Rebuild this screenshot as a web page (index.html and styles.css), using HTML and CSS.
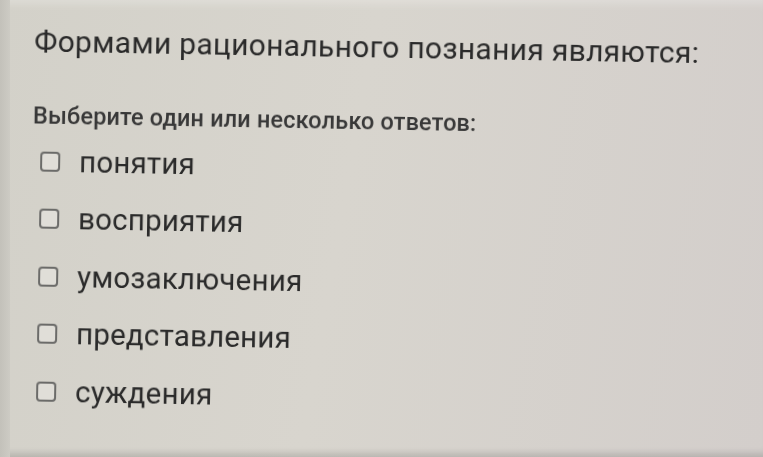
FILE: index.html
```html
<!DOCTYPE html>
<html lang="ru">
<head>
<meta charset="utf-8">
<link rel="stylesheet" href="styles.css">
</head>
<body>
<div class="screen">
  <div class="edge"></div>
  <div class="content">
    <h1 class="question">Формами рационального познания являются:</h1>
    <p class="hint">Выберите один или несколько ответов:</p>
    <ul class="answers">
      <li class="answer"><span class="box"></span><span class="label">понятия</span></li>
      <li class="answer"><span class="box"></span><span class="label">восприятия</span></li>
      <li class="answer"><span class="box"></span><span class="label">умозаключения</span></li>
      <li class="answer"><span class="box"></span><span class="label">представления</span></li>
      <li class="answer"><span class="box"></span><span class="label">суждения</span></li>
    </ul>
  </div>
</div>
</body>
</html>
```
FILE: styles.css
```css
html, body {
  margin: 0;
  padding: 0;
}
body {
  width: 763px;
  height: 457px;
  overflow: hidden;
  font-family: Roboto, "Liberation Sans", sans-serif;
}
.screen {
  width: 763px;
  height: 457px;
  display: flex;
  background: linear-gradient(100deg, #d3d1c9 0%, #d8d5ce 45%, #d3cecb 100%);
  box-shadow: inset 0 -9px 6px -5px rgba(0,0,0,0.14), inset 0 10px 8px -6px rgba(255,255,255,0.25);
}
.edge {
  width: 10px;
  flex: none;
  background: linear-gradient(90deg, #c3c1ba, #cdcbc4);
}
.content {
  padding: 23px 0 0 25px;
  transform: rotate(1deg);
  transform-origin: 0 0;
  filter: blur(0.5px);
}
.question {
  margin: 0;
  font-size: 30px;
  font-weight: 400;
  color: #2a2a2a;
  line-height: 36px;
  letter-spacing: 0.3px;
  white-space: nowrap;
}
.hint {
  margin: 42px 0 0 0;
  font-size: 23.5px;
  font-weight: 500;
  color: #383838;
  line-height: 28px;
  letter-spacing: 0.15px;
  white-space: nowrap;
}
.answers {
  list-style: none;
  margin: 3px 0 0 8px;
  padding: 0;
}
.answer {
  display: flex;
  align-items: center;
  height: 57.5px;
  gap: 19px;
}
.box {
  width: 16px;
  height: 16px;
  border: 2px solid #6b6b69;
  border-radius: 4px;
  background: #e0ded8;
  flex: none;
}
.label {
  font-size: 29.5px;
  color: #2a2a2a;
  letter-spacing: 0.2px;
}
```
